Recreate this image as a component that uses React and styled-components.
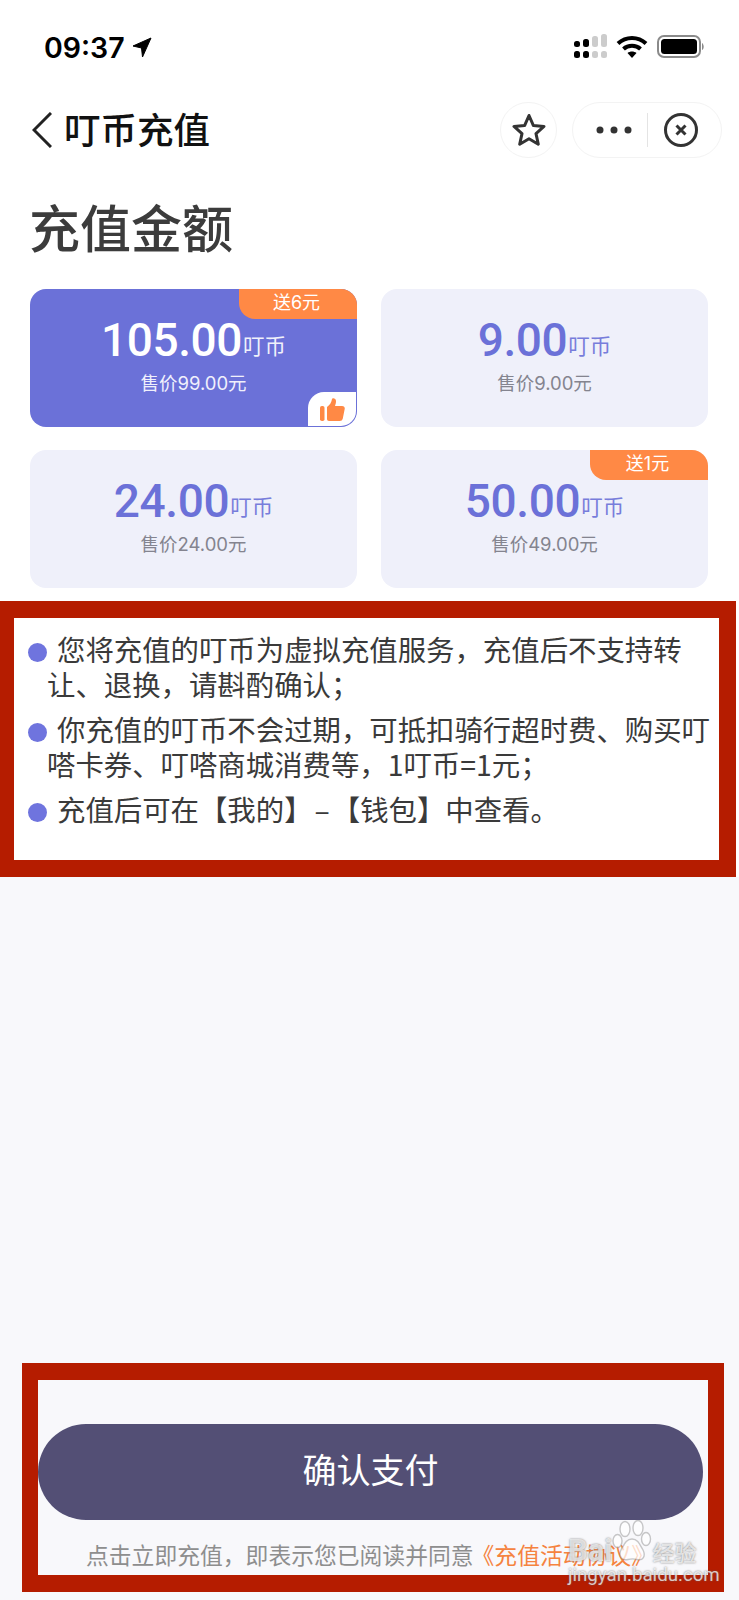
import React from "react";
import styled, { createGlobalStyle } from "styled-components";

const CJK = `"Noto Sans CJK SC", "Noto Sans", sans-serif`;
const LATIN_CJK = `Inter, "Noto Sans CJK SC", sans-serif`;
const PURPLE = "#6b71d8";
const ORANGE = "#ff8945";
const RED = "#b51c00";

const GlobalStyle = createGlobalStyle`
  html, body {
    margin: 0;
    padding: 0;
    background: #fff;
  }
  * {
    box-sizing: border-box;
  }
`;

const Page = styled.div`
  position: relative;
  width: 739px;
  height: 1600px;
  display: flex;
  flex-direction: column;
  overflow: hidden;
  font-family: ${CJK};
  background: #fff;
`;

const StatusBar = styled.div`
  height: 92px;
  padding: 0 34px 0 44px;
  display: flex;
  align-items: center;
  justify-content: space-between;
`;

const Time = styled.div`
  display: flex;
  align-items: center;
  gap: 7px;
  margin-top: 2px;
  font-family: Inter, sans-serif;
  font-weight: 600;
  font-size: 28.5px;
  line-height: 29px;
  color: #000;
`;

const StatusIcons = styled.div`
  display: flex;
  align-items: center;
  gap: 9px;
`;

const NavBar = styled.div`
  margin-top: 10px;
  height: 56px;
  padding: 0 17px 0 32px;
  display: flex;
  align-items: center;
`;

const NavTitle = styled.div`
  margin-left: 12px;
  padding-bottom: 2px;
  flex: 1;
  font-size: 36.5px;
  line-height: 52px;
  font-weight: 500;
  color: #111;
`;

const RoundBtn = styled.div`
  width: 57px;
  height: 56px;
  border: 1px solid #f3f3f3;
  border-radius: 28px;
  display: flex;
  align-items: center;
  justify-content: center;
`;

const Capsule = styled.div`
  margin-left: 15px;
  width: 150px;
  height: 56px;
  border: 1px solid #f3f3f3;
  border-radius: 28px;
  display: flex;
  align-items: center;
  padding-left: 23px;
`;

const Divider = styled.div`
  width: 1px;
  height: 34px;
  margin: 0 15px 0 15px;
  background: #e4e4e4;
`;

const Heading = styled.h1`
  margin: 30px 0 0;
  padding-left: 29px;
  font-size: 51px;
  line-height: 76px;
  font-weight: 500;
  color: #3c3c3c;
`;

const Grid = styled.div`
  margin-top: 25px;
  padding: 0 30px;
  display: grid;
  grid-template-columns: 327px 327px;
  grid-auto-rows: 138px;
  column-gap: 24px;
  row-gap: 23px;
`;

const Card = styled.div`
  position: relative;
  overflow: hidden;
  border-radius: 16px;
  background: ${(p) => (p.$active ? PURPLE : "#eff0fa")};
  color: ${(p) => (p.$active ? "#fff" : PURPLE)};
  display: flex;
  flex-direction: column;
  align-items: center;
  padding-top: 28px;
`;

const Badge = styled.div`
  position: absolute;
  top: 0;
  right: 0;
  width: 118px;
  height: 30px;
  padding: 0 3px 1px 0;
  border-bottom-left-radius: 16px;
  background: ${ORANGE};
  color: #fff;
  font-family: ${LATIN_CJK};
  font-size: 18px;
  line-height: 28px;
  text-align: center;
`;

const Amount = styled.div`
  line-height: 46px;
  white-space: nowrap;
`;

const Digits = styled.span`
  font-family: Roboto, sans-serif;
  font-weight: 500;
  font-size: 46px;
  letter-spacing: -0.4px;
`;

const Unit = styled.span`
  margin-left: 1px;
  font-size: 21.5px;
  font-weight: 400;
  opacity: 0.9;
  vertical-align: 2px;
`;

const Price = styled.div`
  margin-top: -2px;
  font-family: ${LATIN_CJK};
  font-size: 18.5px;
  line-height: 26px;
  color: ${(p) => (p.$active ? "#f0f0fc" : "#84848f")};
`;

const Thumb = styled.div`
  position: absolute;
  right: 1px;
  bottom: 1px;
  width: 48px;
  height: 34px;
  background: #fff;
  border-top-left-radius: 16px;
  border-bottom-right-radius: 15px;
  display: flex;
  align-items: center;
  justify-content: center;
`;

const NoteBox = styled.div`
  margin-top: 13px;
  width: 736px;
  height: 276px;
  border-style: solid;
  border-color: ${RED};
  border-width: 17px 17px 17px 14px;
  background: #fff;
  padding: 14px 0 0 33px;
  font-size: 28.4px;
  line-height: 34.5px;
  color: #3a3a3a;
  white-space: nowrap;
`;

const Note = styled.p`
  margin: 0 0 11px;
  &::before {
    content: "";
    display: inline-block;
    width: 19px;
    height: 19px;
    margin: 0 10px 0 -19px;
    border-radius: 50%;
    background: #6f74de;
    vertical-align: -1px;
  }
`;

const Dash = styled.span`
  margin: 0 2px;
`;

const Rest = styled.div`
  flex: 1;
  display: flex;
  flex-direction: column;
  background: #f8f8fb;
`;

const FooterBox = styled.div`
  margin: 486px 0 0 22px;
  width: 702px;
  height: 229px;
  border: 17px solid ${RED};
  border-left-width: 16px;
  border-right-width: 16px;
  padding-top: 44px;
`;

const PayButton = styled.div`
  width: 665px;
  height: 96px;
  border-radius: 48px;
  background: #534f75;
  color: #fff;
  font-size: 34px;
  line-height: 89px;
  text-align: center;
`;

const Terms = styled.div`
  margin-top: 18px;
  padding-left: 48px;
  font-size: 22.8px;
  line-height: 34px;
  color: #8e8e8e;
  white-space: nowrap;
`;

const TermsLink = styled.span`
  color: #f5833f;
  margin-left: -2px;
`;

const Watermark = styled.div`
  position: absolute;
  left: 566px;
  top: 1518px;
  width: 140px;
  height: 74px;
  color: rgba(255, 255, 255, 0.72);
  text-shadow: 0 0 2px rgba(100, 100, 100, 0.85);
`;

const WmRow = styled.div`
  position: absolute;
  left: 2px;
  top: 13px;
  display: flex;
  align-items: baseline;
  font-family: Roboto, sans-serif;
  font-weight: 700;
  font-size: 31px;
  line-height: 40px;
`;

const WmCn = styled.span`
  margin-left: 40px;
  font-family: ${CJK};
  font-weight: 500;
  font-size: 22px;
`;

const WmUrl = styled.div`
  position: absolute;
  left: 2px;
  top: 46px;
  font-family: Roboto, sans-serif;
  font-size: 18.7px;
  line-height: 22px;
`;

const PawWrap = styled.div`
  position: absolute;
  left: 46px;
  top: 2px;
`;

const LocationIcon = () => (
  <svg width="20" height="21" viewBox="0 0 20 21">
    <path d="M19 1 L1 9 L9.5 11 L10.5 20 Z" fill="#000" stroke="#000" strokeWidth="1" strokeLinejoin="round" />
  </svg>
);

const SignalIcon = () => (
  <svg width="33" height="25" viewBox="0 0 33 25">
    <rect x="0" y="7" width="6" height="6" rx="2.5" fill="#000" />
    <rect x="9" y="5" width="6" height="8" rx="2.5" fill="#000" />
    <rect x="18" y="2" width="6" height="11" rx="2.5" fill="#ccc" />
    <rect x="27" y="0" width="6" height="13" rx="2.5" fill="#ccc" />
    <rect x="0" y="17" width="6" height="7" rx="2.5" fill="#000" />
    <rect x="9" y="17" width="6" height="7" rx="2.5" fill="#000" />
    <rect x="18" y="17" width="6" height="7" rx="2.5" fill="#ccc" />
    <rect x="27" y="17" width="6" height="7" rx="2.5" fill="#ccc" />
  </svg>
);

const WifiIcon = () => (
  <svg width="32" height="23" viewBox="0 0 32 23" fill="none" stroke="#000" strokeWidth="4">
    <path d="M2 8.5 C10 1 22 1 30 8.5" />
    <path d="M7.5 14 C12 9.8 20 9.8 24.5 14" />
    <path d="M16 23 L11.5 18 C14 16 18 16 20.5 18 Z" fill="#000" stroke="none" />
  </svg>
);

const BatteryIcon = () => (
  <svg width="48" height="23" viewBox="0 0 48 23">
    <rect x="1" y="1" width="42" height="21" rx="6" fill="none" stroke="#8a8a8a" strokeWidth="2" />
    <rect x="4" y="4" width="36" height="15" rx="3.5" fill="#000" />
    <path d="M45 8 C47 9 47.5 14 45 15 Z" fill="#8a8a8a" />
  </svg>
);

const BackIcon = () => (
  <svg width="20" height="36" viewBox="0 0 20 36" fill="none" stroke="#222" strokeWidth="3">
    <path d="M19 1 L2 18 L19 35" />
  </svg>
);

const StarIcon = () => (
  <svg width="34" height="34" viewBox="0 0 34 34" fill="none" stroke="#333" strokeWidth="3" strokeLinejoin="round">
    <path d="M17 2.5 L21.3 12.4 L32 13.4 L24 20.6 L26.3 31.2 L17 25.7 L7.7 31.2 L10 20.6 L2 13.4 L12.7 12.4 Z" />
  </svg>
);

const DotsIcon = () => (
  <svg width="36" height="10" viewBox="0 0 36 10" fill="#333">
    <circle cx="4" cy="5" r="3.5" />
    <circle cx="18" cy="5" r="3.5" />
    <circle cx="32" cy="5" r="3.5" />
  </svg>
);

const CloseIcon = () => (
  <svg width="36" height="36" viewBox="0 0 36 36" fill="none" stroke="#333">
    <circle cx="18" cy="18" r="15.5" strokeWidth="3" />
    <path d="M13.5 13.5 L22.5 22.5 M22.5 13.5 L13.5 22.5" strokeWidth="3" />
  </svg>
);

const ThumbIcon = () => (
  <svg width="25" height="23" viewBox="0 0 25 23" fill={ORANGE}>
    <rect x="0" y="8" width="4.5" height="15" rx="1.8" />
    <path d="M7 9 C10 7 11.5 4 12 1 C12.3 -0.4 16 -0.2 16 3 C16 5 15.5 6.5 15 8 L22 8 C24.3 8 25 9.5 24.7 11 L22.8 20.5 C22.4 22.2 21.3 23 19.8 23 L9 23 C7.8 23 7 22.2 7 21 Z" />
  </svg>
);

const PawIcon = () => (
  <svg width="40" height="42" viewBox="0 0 40 42" fill="rgba(255,255,255,0.72)" stroke="rgba(120,120,120,0.4)" strokeWidth="1.4">
    <ellipse cx="13" cy="9" rx="5" ry="7.5" />
    <ellipse cx="26" cy="8" rx="5" ry="7.5" />
    <ellipse cx="5.5" cy="21" rx="4.5" ry="6.5" />
    <ellipse cx="34" cy="19" rx="4.5" ry="6.5" />
    <path d="M20 19 C14 19 12 25 9 30 C6 36 10 41 16 39.5 C19 38.7 22 38.7 25 39.5 C31 41 34 36 31 30 C28 25 26 19 20 19 Z" />
  </svg>
);

const plans = [
  { amount: "105.00", price: "售价99.00元", gift: "送6元", active: true },
  { amount: "9.00", price: "售价9.00元" },
  { amount: "24.00", price: "售价24.00元" },
  { amount: "50.00", price: "售价49.00元", gift: "送1元" },
];

const App = () => (
  <>
    <GlobalStyle />
    <Page>
      <StatusBar>
        <Time>
          09:37
          <LocationIcon />
        </Time>
        <StatusIcons>
          <SignalIcon />
          <WifiIcon />
          <BatteryIcon />
        </StatusIcons>
      </StatusBar>

      <NavBar>
        <BackIcon />
        <NavTitle>叮币充值</NavTitle>
        <RoundBtn>
          <StarIcon />
        </RoundBtn>
        <Capsule>
          <DotsIcon />
          <Divider />
          <CloseIcon />
        </Capsule>
      </NavBar>

      <Heading>充值金额</Heading>

      <Grid>
        {plans.map((plan) => (
          <Card key={plan.amount} $active={plan.active}>
            {plan.gift && <Badge>{plan.gift}</Badge>}
            <Amount>
              <Digits>{plan.amount}</Digits>
              <Unit>叮币</Unit>
            </Amount>
            <Price $active={plan.active}>{plan.price}</Price>
            {plan.active && (
              <Thumb>
                <ThumbIcon />
              </Thumb>
            )}
          </Card>
        ))}
      </Grid>

      <NoteBox>
        <Note>
          您将充值的叮币为虚拟充值服务，充值后不支持转
          <br />
          让、退换，请斟酌确认；
        </Note>
        <Note>
          你充值的叮币不会过期，可抵扣骑行超时费、购买叮
          <br />
          嗒卡券、叮嗒商城消费等，1叮币=1元；
        </Note>
        <Note>
          充值后可在【我的】<Dash>–</Dash>【钱包】中查看。
        </Note>
      </NoteBox>

      <Rest>
        <FooterBox>
          <PayButton>确认支付</PayButton>
          <Terms>
            点击立即充值，即表示您已阅读并同意
            <TermsLink>《充值活动协议》</TermsLink>
          </Terms>
        </FooterBox>
      </Rest>

      <Watermark>
        <PawWrap>
          <PawIcon />
        </PawWrap>
        <WmRow>
          Bai
          <WmCn>经验</WmCn>
        </WmRow>
        <WmUrl>jingyan.baidu.com</WmUrl>
      </Watermark>
    </Page>
  </>
);

export default App;
